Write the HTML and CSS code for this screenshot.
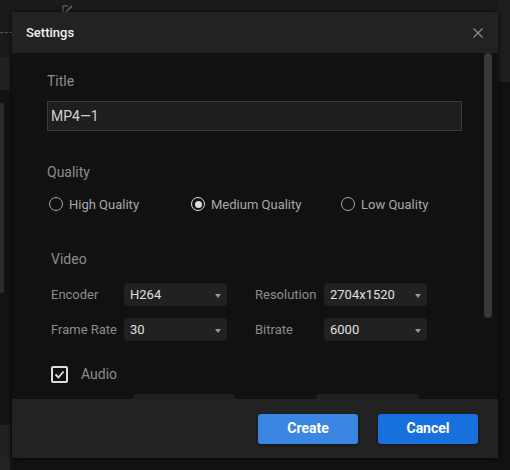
FILE: index.html
```html
<!DOCTYPE html>
<html>
<head>
<meta charset="utf-8">
<link rel="stylesheet" href="styles.css">
</head>
<body>
<div class="app">
  <div class="topbar">
    <div class="dash"></div>
    <svg class="pencil" width="12" height="10" viewBox="0 0 12 10"><path d="M1 9V1h5" fill="none" stroke="#777" stroke-width="1"/><path d="M4 7l6-6" stroke="#777" stroke-width="1.2"/></svg>
    <div class="topright"></div>
  </div>
  <div class="main">
    <div class="side">
      <div class="side-tab"></div>
      <div class="side-panel"></div>
      <div class="side-bottom"></div>
    </div>
    <div class="center"></div>
  </div>
</div>

<div class="modal">
  <div class="modal-header">
    <span class="modal-title">Settings</span>
    <svg class="close" width="10" height="10" viewBox="0 0 10 10"><path d="M0.5 0.5l9 9M9.5 0.5l-9 9" stroke="#8a8a8a" stroke-width="1.3"/></svg>
  </div>
  <div class="modal-body">
    <div class="label">Title</div>
    <div class="input">MP4—1</div>

    <div class="label quality-label">Quality</div>
    <div class="radios">
      <div class="radio r1"><span class="circle"></span>High Quality</div>
      <div class="radio r2"><span class="circle on"></span>Medium Quality</div>
      <div class="radio r3"><span class="circle"></span>Low Quality</div>
    </div>

    <div class="video">
      <div class="label video-label">Video</div>
      <div class="row row1">
        <span class="flabel l1">Encoder</span>
        <div class="select">H264<span class="caret"></span></div>
        <span class="flabel l2">Resolution</span>
        <div class="select">2704x1520<span class="caret"></span></div>
      </div>
      <div class="row row2">
        <span class="flabel l1">Frame Rate</span>
        <div class="select">30<span class="caret"></span></div>
        <span class="flabel l2">Bitrate</span>
        <div class="select">6000<span class="caret"></span></div>
      </div>
      <div class="check-row">
        <span class="checkbox"><svg width="13" height="13" viewBox="0 0 13 13"><path d="M2.5 6.5l3 3 5-6" fill="none" stroke="#e0e0e0" stroke-width="1.8"/></svg></span>
        <span class="check-label">Audio</span>
      </div>
      <div class="row row3">
        <span class="flabel a1 hidden">Channels</span>
        <div class="select"></div>
        <span class="flabel a2 hidden">Sample</span>
        <div class="select"></div>
      </div>
    </div>
    <div class="scrollbar"></div>
  </div>
  <div class="modal-footer">
    <button class="btn create">Create</button>
    <button class="btn cancel">Cancel</button>
  </div>
</div>
</body>
</html>
```

FILE: styles.css
```css
* { box-sizing: border-box; }
html, body {
  margin: 0;
  width: 510px;
  height: 470px;
  overflow: hidden;
  background: #141414;
  font-family: Roboto, "Liberation Sans", sans-serif;
}

/* background app */
.app {
  width: 510px;
  height: 470px;
  display: flex;
  flex-direction: column;
}
.topbar {
  height: 57px;
  background: #1b1b1b;
  position: relative;
  display: flex;
}
.dash {
  width: 12px;
  height: 0;
  margin-top: 32px;
  border-top: 1px dashed #555;
}
.pencil {
  margin: 5px 0 0 50px;
}
.topright {
  margin-left: auto;
  width: 12px;
  height: 82px;
  background: #1e1e1e;
}
.main {
  flex: 1;
  display: flex;
}
.side {
  width: 12px;
  display: flex;
  flex-direction: column;
  background: #141414;
}
.side-tab {
  height: 33px;
  width: 10px;
  background: #222;
}
.side-panel {
  margin-top: 13px;
  height: 190px;
  width: 4px;
  background: #2c2c2c;
  border-radius: 0 2px 2px 0;
}
.side-bottom {
  margin-top: auto;
  height: 45px;
  width: 10px;
  background: #222;
}
.center { flex: 1; background: #111; }

/* modal */
.modal {
  position: absolute;
  left: 12px;
  top: 12px;
  width: 486px;
  height: 446px;
  display: flex;
  flex-direction: column;
  box-shadow: 0 0 6px rgba(0,0,0,0.7);
}
.modal-header {
  height: 41px;
  background: #222;
  display: flex;
  align-items: center;
  justify-content: space-between;
  padding: 0 15px 0 14px;
}
.modal-title {
  color: #f0f0f0;
  font-size: 13px;
  font-weight: 500;
}
.modal-body {
  height: 346px;
  background: #111;
  position: relative;
  overflow: hidden;
  padding: 18px 0 0 35px;
}
.label {
  color: #8c8c8c;
  font-size: 14px;
  line-height: 20px;
}
.input {
  margin-top: 10px;
  width: 415px;
  height: 30px;
  border: 1px solid #3a3a3a;
  background: #1e1e1e;
  color: #d0d0d0;
  font-size: 14px;
  line-height: 28px;
  padding-left: 3px;
}
.quality-label { margin-top: 31px; }
.radios {
  margin-top: 12px;
  display: flex;
  height: 20px;
  align-items: center;
  padding-left: 2px;
}
.radio {
  display: flex;
  align-items: center;
  gap: 6px;
  color: #a8a8a8;
  font-size: 13px;
}
.r1 { width: 142px; }
.r2 { width: 150px; }
.circle {
  width: 14px;
  height: 14px;
  border-radius: 50%;
  border: 1.5px solid #aaa;
  display: flex;
  align-items: center;
  justify-content: center;
}
.circle.on { border-color: #ddd; }
.circle.on::after {
  content: "";
  width: 7px;
  height: 7px;
  border-radius: 50%;
  background: #ddd;
}
.video { padding-left: 4px; }
.video-label { margin-top: 35px; }
.row {
  display: flex;
  align-items: center;
  height: 23px;
}
.row1 { margin-top: 14px; }
.row2 { margin-top: 12px; }
.row3 { margin-top: 10px; }
.flabel {
  color: #8c8c8c;
  font-size: 13px;
}
.flabel.l1 { width: 73px; }
.flabel.l2 { width: 69px; margin-left: 28px; }
.flabel.a1 { width: 82px; }
.flabel.a2 { width: 81px; }
.row3 .select { width: 102px; }
.hidden { visibility: hidden; }
.select {
  width: 103px;
  height: 23px;
  border-radius: 4px;
  background: #212121;
  color: #e0e0e0;
  font-size: 13px;
  padding-left: 6px;
  display: flex;
  align-items: center;
  justify-content: space-between;
  padding-right: 6px;
}
.caret {
  width: 0;
  height: 0;
  border-left: 3.5px solid transparent;
  border-right: 3.5px solid transparent;
  border-top: 4px solid #9a9a9a;
  margin-left: auto;
  margin-top: 2px;
}
.check-row {
  margin-top: 23px;
  display: flex;
  align-items: center;
  height: 20px;
  gap: 13px;
}
.checkbox {
  width: 17px;
  height: 17px;
  border: 2px solid #ddd;
  border-radius: 2px;
  display: flex;
  align-items: center;
  justify-content: center;
}
.check-label {
  color: #8c8c8c;
  font-size: 14px;
}
.scrollbar {
  position: absolute;
  right: 6px;
  top: 0;
  width: 8px;
  height: 265px;
  border-radius: 4px;
  background: #383838;
}
.modal-footer {
  height: 59px;
  background: #222;
  display: flex;
  justify-content: flex-end;
  align-items: center;
  gap: 20px;
  padding-right: 20px;
}
.btn {
  width: 100px;
  height: 30px;
  border: none;
  border-radius: 3px;
  color: #fff;
  font-family: Roboto, "Liberation Sans", sans-serif;
  font-size: 14px;
  font-weight: 700;
  line-height: 28px;
  padding: 0 0 2px;
  box-shadow: 0 1px 3px rgba(0,0,0,0.5);
}
.create { background: #3a86e2; }
.cancel { background: #1870de; }
```
